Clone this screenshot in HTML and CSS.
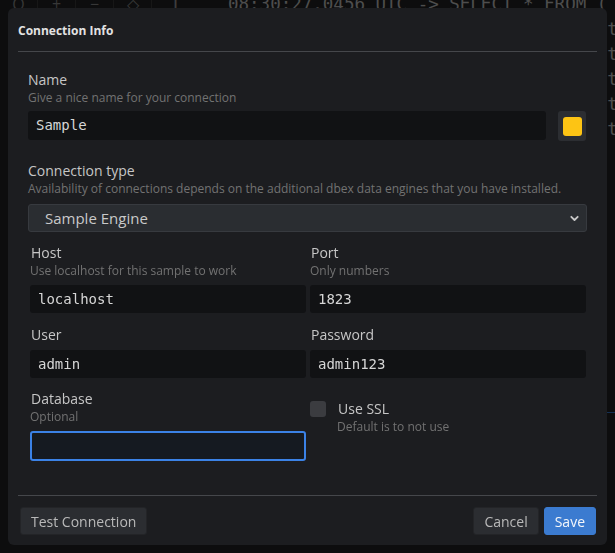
FILE: index.html
```html
<!DOCTYPE html>
<html lang="en">
<head>
<meta charset="utf-8">
<title>Connection Info</title>
<link rel="stylesheet" href="styles.css">
</head>
<body>
<div class="app">
  <div class="tools">
    <span class="tb-icon">Q</span>
    <span class="tb-icon">+</span>
    <span class="tb-icon">−</span>
    <span class="tb-icon">◇</span>
    <span class="tb-num">1</span>
  </div>
  <div class="log">
    <div class="log-line">08:30:27.0456 UTC -&gt; SELECT * FROM (</div>
    <div class="log-line">08:30:27.0461 UTC -&gt; rows returned: t</div>
    <div class="log-line">08:30:27.0466 UTC -&gt; rows returned: t</div>
    <div class="log-line">08:30:27.0471 UTC -&gt; rows returned: t</div>
    <div class="log-line">08:30:27.0476 UTC -&gt; rows returned: t</div>
    <div class="log-line">08:30:27.0481 UTC -&gt; rows returned: t</div>
    <div class="results"></div>
  </div>
</div>

<div class="overlay">
  <div class="dialog">
    <div class="dialog-header">
      <h1 class="dialog-title">Connection Info</h1>
    </div>

    <div class="dialog-body">
      <div class="field field-name">
        <div class="label">Name</div>
        <div class="hint">Give a nice name for your connection</div>
        <div class="name-row">
          <div class="input mono">Sample</div>
          <button class="swatch-btn"><span class="swatch"></span></button>
        </div>
      </div>

      <div class="field field-type">
        <div class="label">Connection type</div>
        <div class="hint">Availability of connections depends on the additional dbex data engines that you have installed.</div>
        <div class="select">
          <span>Sample Engine</span>
          <svg class="chev" width="9" height="7" viewBox="0 0 9 7"><path d="M1.3 1.8 L4.5 5 L7.7 1.8" fill="none" stroke="#c8c8c8" stroke-width="1.8" stroke-linecap="round" stroke-linejoin="round"/></svg>
        </div>
      </div>

      <div class="grid">
        <div class="cell">
          <div class="label">Host</div>
          <div class="hint">Use localhost for this sample to work</div>
          <div class="input mono">localhost</div>
        </div>
        <div class="cell">
          <div class="label">Port</div>
          <div class="hint">Only numbers</div>
          <div class="input mono">1823</div>
        </div>
        <div class="cell">
          <div class="label">User</div>
          <div class="input mono">admin</div>
        </div>
        <div class="cell">
          <div class="label">Password</div>
          <div class="input mono">admin123</div>
        </div>
        <div class="cell">
          <div class="label">Database</div>
          <div class="hint">Optional</div>
          <div class="input mono focused"></div>
        </div>
        <div class="cell ssl">
          <span class="checkbox"></span>
          <div class="ssl-text">
            <div class="label">Use SSL</div>
            <div class="hint">Default is to not use</div>
          </div>
        </div>
      </div>
    </div>

    <div class="dialog-footer">
      <button class="btn">Test Connection</button>
      <div class="footer-right">
        <button class="btn">Cancel</button>
        <button class="btn btn-primary">Save</button>
      </div>
    </div>
  </div>
</div>
</body>
</html>
```

FILE: styles.css
```css
* { box-sizing: border-box; }

html, body {
  margin: 0;
  padding: 0;
  width: 615px;
  height: 553px;
  overflow: hidden;
}

body {
  background: #1d1e21;
  font-family: "Open Sans", "Noto Sans", sans-serif;
  color: #c9c9c9;
}

/* background app */
.app {
  height: 553px;
  overflow: hidden;
  display: grid;
  grid-template-columns: 228px 400px;
  align-items: start;
}

.tools {
  display: flex;
  margin-top: -6px;
  height: 20px;
}

.tb-icon {
  flex: none;
  width: 38px;
  height: 20px;
  text-align: center;
  color: #7a7a7a;
  font-size: 16px;
  line-height: 20px;
  border-right: 1px solid #333;
}

.tb-num {
  flex: none;
  width: 46px;
  text-align: center;
  color: #8a8a8a;
  font-family: "DejaVu Sans Mono", monospace;
  font-size: 18px;
  line-height: 20px;
}

.log {
  margin-top: -8px;
  font-family: "DejaVu Sans Mono", monospace;
  font-size: 17.5px;
  color: #ababab;
}

.log-line {
  height: 25px;
  line-height: 25px;
  white-space: pre;
}

.results {
  margin-top: 270px;
  height: 20px;
  border-top: 1px solid #2f6ab8;
}

/* overlay */
.overlay {
  position: fixed;
  inset: 0;
  padding: 8px;
  background: rgba(0, 0, 0, 0.55);
}

.dialog {
  height: 100%;
  background: #1c1d20;
  border-radius: 6px;
  display: flex;
  flex-direction: column;
}

.dialog-header {
  margin: 0 10px;
  height: 44px;
  border-bottom: 1px solid #45474b;
  display: flex;
  align-items: center;
}

.dialog-title {
  margin: 0;
  padding-top: 2px;
  font-size: 12px;
  font-weight: 700;
  color: #e2e2e2;
}

.dialog-body {
  flex: 1;
  padding: 18px 20px 0 20px;
}

.label {
  font-size: 14px;
  line-height: 20px;
  color: #c6c6c6;
}

.hint {
  font-size: 12px;
  line-height: 16px;
  color: #727272;
}

.mono {
  font-family: "DejaVu Sans Mono", monospace;
}

.input {
  height: 29px;
  background: #111214;
  border-radius: 3px;
  padding: 0 8px;
  font-size: 14px;
  line-height: 29px;
  color: #d6d6d6;
}

.field-name .name-row {
  display: flex;
  align-items: flex-start;
  gap: 12px;
  margin-top: 5px;
}

.name-row .input {
  flex: 1;
}

.swatch-btn {
  width: 28px;
  height: 30px;
  margin-right: 1px;
  padding: 0;
  border: none;
  border-radius: 3px;
  background: #2c2e32;
  display: flex;
  align-items: center;
  justify-content: center;
}

.swatch {
  width: 19px;
  height: 19px;
  border-radius: 3px;
  background: #fdc414;
}

.field-type {
  margin-top: 20px;
}

.select {
  margin-top: 7px;
  height: 28px;
  background: #2a2d31;
  border: 1px solid #373a3f;
  border-radius: 3px;
  padding: 0 7px 0 16px;
  display: flex;
  align-items: center;
  justify-content: space-between;
  font-size: 15px;
  color: #c9c9c9;
}

.grid {
  margin: 11px 0 0 2px;
  width: 556px;
  display: grid;
  grid-template-columns: 1fr 1fr;
  column-gap: 4px;
  row-gap: 12px;
}

.cell .label {
  padding-left: 1px;
}

.cell .input {
  margin-top: 6px;
  height: 28px;
  line-height: 28px;
}

.cell:nth-child(3) .input,
.cell:nth-child(4) .input {
  margin-top: 5px;
}

.cell:nth-child(5),
.cell:nth-child(6) {
  margin-top: -1px;
}

.input.focused {
  height: 30px;
  border: 2px solid #3b82e6;
  background: #151a21;
}

.ssl {
  display: flex;
  align-items: flex-start;
  gap: 11px;
}

.checkbox {
  margin-top: 12px;
  width: 16px;
  height: 16px;
  border-radius: 3px;
  background: #3b3c40;
  flex: none;
}

.ssl-text {
  padding-top: 10px;
}

.dialog-footer {
  margin: 0 10px;
  border-top: 1px solid #45474b;
  padding: 11px 1px 10px 2px;
  display: flex;
  justify-content: space-between;
}

.footer-right {
  display: flex;
  gap: 5px;
}

.btn {
  height: 28px;
  padding: 0 10px;
  border: 1px solid #232427;
  border-radius: 3px;
  background: #2b2d31;
  color: #b9b9b9;
  font-family: "Open Sans", "Noto Sans", sans-serif;
  font-size: 14px;
}

.btn-primary {
  background: #3b7bd0;
  border-color: #3b7bd0;
  color: #f4f7fb;
}
```
